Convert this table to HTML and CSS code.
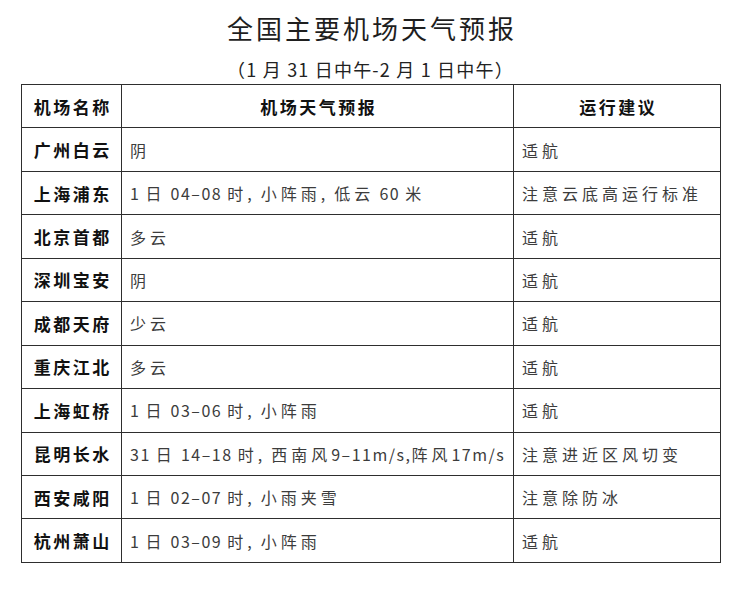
FILE: index.html
```html
<!DOCTYPE html>
<html lang="zh-CN">
<head>
<meta charset="utf-8">
<title>全国主要机场天气预报</title>
<link rel="stylesheet" href="styles.css">
</head>
<body>
<div class="page">
  <h1 class="title">全国主要机场天气预报</h1>
  <p class="subtitle">（1 月 31 日中午-2 月 1 日中午）</p>
  <table class="forecast">
    <colgroup>
      <col class="c-name">
      <col class="c-wx">
      <col class="c-adv">
    </colgroup>
    <thead>
      <tr>
        <th>机场名称</th>
        <th>机场天气预报</th>
        <th>运行建议</th>
      </tr>
    </thead>
    <tbody>
      <tr><td class="name">广州白云</td><td class="wx">阴</td><td class="adv">适航</td></tr>
      <tr><td class="name">上海浦东</td><td class="wx"><span class="n">1 </span>日<span class="n"> 04–08 </span>时,<span class="n"> </span>小阵雨,<span class="n"> </span>低云<span class="n"> 60 </span>米</td><td class="adv">注意云底高运行标准</td></tr>
      <tr><td class="name">北京首都</td><td class="wx">多云</td><td class="adv">适航</td></tr>
      <tr><td class="name">深圳宝安</td><td class="wx">阴</td><td class="adv">适航</td></tr>
      <tr><td class="name">成都天府</td><td class="wx">少云</td><td class="adv">适航</td></tr>
      <tr><td class="name">重庆江北</td><td class="wx">多云</td><td class="adv">适航</td></tr>
      <tr><td class="name">上海虹桥</td><td class="wx"><span class="n">1 </span>日<span class="n"> 03–06 </span>时,<span class="n"> </span>小阵雨</td><td class="adv">适航</td></tr>
      <tr><td class="name">昆明长水</td><td class="wx"><span class="n">31 </span>日<span class="n"> 14–18 </span>时,<span class="n"> </span>西南风<span class="n">9–11m/s,</span>阵风<span class="n">17m/s</span></td><td class="adv">注意进近区风切变</td></tr>
      <tr><td class="name">西安咸阳</td><td class="wx"><span class="n">1 </span>日<span class="n"> 02–07 </span>时,<span class="n"> </span>小雨夹雪</td><td class="adv">注意除防冰</td></tr>
      <tr><td class="name">杭州萧山</td><td class="wx"><span class="n">1 </span>日<span class="n"> 03–09 </span>时,<span class="n"> </span>小阵雨</td><td class="adv">适航</td></tr>
    </tbody>
  </table>
</div>
</body>
</html>
```

FILE: styles.css
```css
html, body {
  margin: 0;
  padding: 0;
  background: #ffffff;
}

body {
  font-family: "Noto Sans CJK SC", "Noto Sans", sans-serif;
  color: #222222;
}

.page {
  width: 699px;
  margin-left: 21px;
  padding-top: 10px;
}

.title {
  margin: 0;
  text-align: center;
  font-size: 26px;
  line-height: 36px;
  font-weight: 400;
  letter-spacing: 3px;
  text-indent: 3px;
  color: #1e1e1e;
}

.subtitle {
  margin: 11px 0 0;
  text-align: center;
  font-size: 18px;
  line-height: 24px;
  letter-spacing: 1.2px;
  color: #222222;
}

.forecast {
  margin-top: 3px;
  width: 699px;
  border-collapse: collapse;
  table-layout: fixed;
}

.c-name { width: 100px; }
.c-wx { width: 392px; }
.c-adv { width: 207px; }

.forecast tr {
  height: 43.45px;
}

.forecast th,
.forecast td {
  border: 1px solid #2e2e2e;
  padding: 0;
  vertical-align: middle;
  white-space: nowrap;
}

.forecast th {
  font-size: 17px;
  font-weight: 700;
  letter-spacing: 2.5px;
  text-indent: 2.5px;
  text-align: center;
  color: #111111;
}

.forecast td.name {
  font-size: 17px;
  font-weight: 700;
  letter-spacing: 2.5px;
  text-indent: 2.5px;
  text-align: center;
  color: #111111;
}

.forecast td.wx,
.forecast td.adv {
  font-size: 16px;
  letter-spacing: 4px;
  padding-left: 8px;
  color: #3c3c3c;
  text-align: left;
}

.n {
  letter-spacing: 1.5px;
}
```
